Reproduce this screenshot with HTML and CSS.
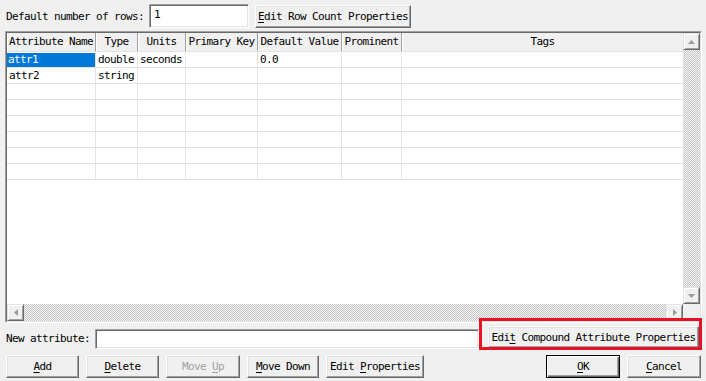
FILE: index.html
```html
<!DOCTYPE html>
<html>
<head>
<meta charset="utf-8">
<link rel="stylesheet" href="styles.css">
</head>
<body>
<div class="dialog">
  <div class="top-row">
    <span class="rows-lbl">Default number of rows:</span>
    <div class="field rows-field">1</div>
    <button class="btn row-count-btn"><u>E</u>dit Row Count Properties</button>
  </div>

  <div class="frame">
    <div class="frame-inner">
      <div class="upper">
        <div class="grid">
          <div class="head">
            <div class="hc">Attribute Name</div>
            <div class="hc">Type</div>
            <div class="hc">Units</div>
            <div class="hc">Primary Key</div>
            <div class="hc">Default Value</div>
            <div class="hc">Prominent</div>
            <div class="hc last">Tags</div>
          </div>
          <div class="row">
            <div class="c sel">attr1</div><div class="c">double</div><div class="c">seconds</div><div class="c"></div><div class="c">0.0</div><div class="c"></div><div class="c last"></div>
          </div>
          <div class="row">
            <div class="c">attr2</div><div class="c">string</div><div class="c"></div><div class="c"></div><div class="c"></div><div class="c"></div><div class="c last"></div>
          </div>
          <div class="row">
            <div class="c"></div><div class="c"></div><div class="c"></div><div class="c"></div><div class="c"></div><div class="c"></div><div class="c last"></div>
          </div>
          <div class="row">
            <div class="c"></div><div class="c"></div><div class="c"></div><div class="c"></div><div class="c"></div><div class="c"></div><div class="c last"></div>
          </div>
          <div class="row">
            <div class="c"></div><div class="c"></div><div class="c"></div><div class="c"></div><div class="c"></div><div class="c"></div><div class="c last"></div>
          </div>
          <div class="row">
            <div class="c"></div><div class="c"></div><div class="c"></div><div class="c"></div><div class="c"></div><div class="c"></div><div class="c last"></div>
          </div>
          <div class="row">
            <div class="c"></div><div class="c"></div><div class="c"></div><div class="c"></div><div class="c"></div><div class="c"></div><div class="c last"></div>
          </div>
          <div class="row">
            <div class="c"></div><div class="c"></div><div class="c"></div><div class="c"></div><div class="c"></div><div class="c"></div><div class="c last"></div>
          </div>
        </div>
        <div class="vscroll">
          <div class="sbtn"><svg width="7" height="4" viewBox="0 0 7 4"><path d="M0 4L3.5 0L7 4Z" fill="#9a9a9a"/></svg></div>
          <div class="trough"></div>
          <div class="sbtn"><svg width="7" height="4" viewBox="0 0 7 4"><path d="M0 0L7 0L3.5 4Z" fill="#9a9a9a"/></svg></div>
        </div>
      </div>
      <div class="lower">
        <div class="hscroll">
          <div class="sbtn"><svg width="4" height="7" viewBox="0 0 4 7"><path d="M4 0L0 3.5L4 7Z" fill="#9a9a9a"/></svg></div>
          <div class="trough"></div>
          <div class="sbtn"><svg width="4" height="7" viewBox="0 0 4 7"><path d="M0 0L4 3.5L0 7Z" fill="#9a9a9a"/></svg></div>
        </div>
        <div class="corner"></div>
      </div>
    </div>
  </div>

  <div class="new-row">
    <span class="new-lbl">New attribute:</span>
    <div class="field new-field"></div>
    <button class="btn compound-btn">Edi<u>t</u> Compound Attribute Properties</button>
  </div>

  <div class="btn-row">
    <button class="btn b-add"><u>A</u>dd</button>
    <button class="btn b-del"><u>D</u>elete</button>
    <button class="btn b-up disabled">Move <u>U</u>p</button>
    <button class="btn b-down"><u>M</u>ove Down</button>
    <button class="btn b-props">Edit <u>P</u>roperties</button>
    <button class="btn b-ok default"><u>O</u>K</button>
    <button class="btn b-cancel"><u>C</u>ancel</button>
  </div>

  <div class="callout"></div>
</div>
</body>
</html>
```

FILE: styles.css
```css
html, body {
  margin: 0;
  padding: 0;
}
body {
  width: 706px;
  height: 381px;
  overflow: hidden;
  background: #f0f0f0;
  font-family: "DejaVu Sans Mono", "Liberation Mono", monospace;
  font-size: 11px;
  letter-spacing: -0.62px;
  color: #000;
}
.dialog {
  position: relative;
  width: 706px;
  height: 381px;
}

/* top row */
.top-row {
  display: flex;
  align-items: center;
  height: 24px;
  padding-top: 4px;
  margin-bottom: 3px;
}
.rows-lbl {
  width: 149px;
  padding-left: 6px;
  box-sizing: border-box;
  white-space: nowrap;
}
.field {
  background: #fff;
  border: 1px solid;
  border-color: #a0a0a0 #fff #fff #a0a0a0;
  box-shadow: inset 1px 1px #696969, inset -1px -1px #e3e3e3;
  box-sizing: border-box;
}
.rows-field {
  width: 100px;
  height: 24px;
  padding-left: 4px;
  line-height: 20px;
}
.btn {
  font: inherit;
  letter-spacing: inherit;
  color: #000;
  background: #f0f0f0;
  border: 1px solid;
  border-color: #fff #696969 #696969 #fff;
  box-shadow: inset -1px -1px #a0a0a0, inset 1px 1px #e3e3e3;
  padding: 0;
  margin: 0;
  box-sizing: border-box;
  text-align: center;
  white-space: nowrap;
}
.btn u {
  text-underline-offset: 2px;
}
.row-count-btn {
  margin-left: 6px;
  width: 156px;
  height: 23px;
}

/* table frame */
.frame {
  margin-left: 5px;
  width: 697px;
  height: 292px;
  border: 1px solid;
  border-color: #a0a0a0 #fff #fff #a0a0a0;
  box-sizing: border-box;
}
.frame-inner {
  height: 100%;
  border: 1px solid;
  border-color: #696969 #e3e3e3 #e3e3e3 #696969;
  box-sizing: border-box;
  display: flex;
  flex-direction: column;
}
.upper {
  display: flex;
  height: 271px;
}
.grid {
  width: 676px;
  background: #fff;
}
.head,
.row {
  display: grid;
  grid-template-columns: 89px 42px 48px 72px 84px 60px 1fr;
}
.head {
  height: 19px;
  background: #f0f0f0;
  border-bottom: 1px solid #e3e3e3;
  box-sizing: border-box;
}
.hc {
  border-right: 1px solid #a0a0a0;
  box-shadow: inset 1px 0 #fff;
  text-align: center;
  line-height: 18px;
  white-space: nowrap;
  overflow: hidden;
}
.hc.last {
  border-right: none;
}
.row {
  height: 16px;
  border-bottom: 1px solid #e3e3e3;
  box-sizing: border-box;
}
.c {
  border-right: 1px solid #e3e3e3;
  padding-left: 2px;
  line-height: 15px;
  white-space: nowrap;
  overflow: hidden;
}
.c.last {
  border-right: none;
}
.c.sel {
  background: #0078d7;
  color: #fff;
  padding-left: 1px;
  box-shadow: inset 0 1px #fff;
}

/* scrollbars */
.vscroll {
  width: 17px;
  display: flex;
  flex-direction: column;
}
.lower {
  display: flex;
  height: 17px;
}
.hscroll {
  width: 676px;
  display: flex;
}
.corner {
  flex: 1;
  background: #f0f0f0;
}
.sbtn {
  width: 17px;
  height: 17px;
  flex: none;
  box-sizing: border-box;
  background: #f0f0f0;
  border: 1px solid;
  border-color: #e3e3e3 #696969 #696969 #e3e3e3;
  box-shadow: inset 1px 1px #fff, inset -1px -1px #a0a0a0;
  display: flex;
  align-items: center;
  justify-content: center;
}
.trough {
  flex: 1;
  background: repeating-conic-gradient(#f4f4f4 0 25%, #c6c6c6 0 50%) 0 0 / 2px 2px;
}

/* new attribute row */
.new-row {
  display: flex;
  align-items: flex-end;
  height: 28px;
}
.new-lbl {
  width: 95px;
  padding-left: 6px;
  box-sizing: border-box;
  line-height: 20px;
  margin-bottom: 2px;
  white-space: nowrap;
}
.new-field {
  width: 384px;
  height: 20px;
  margin-bottom: 2px;
}
.compound-btn {
  margin-left: 9px;
  width: 211px;
  height: 22px;
  margin-bottom: 3px;
}

/* bottom buttons */
.btn-row {
  display: flex;
  gap: 7px;
  margin-top: 4px;
  padding: 0 5px 0 6px;
  height: 23px;
}
.btn-row .btn {
  height: 23px;
}
.b-add { width: 73px; }
.b-del { width: 73px; }
.b-up { width: 74px; }
.b-down { width: 72px; }
.b-props { width: 98px; }
.b-ok { width: 74px; margin-left: auto; }
.b-cancel { width: 74px; }
.btn.disabled {
  color: #a0a0a0;
}
.btn.default {
  border-color: #000;
  box-shadow: inset 1px 1px #fff, inset -1px -1px #696969, inset -2px -2px #a0a0a0;
}

/* annotation overlay */
.callout {
  position: absolute;
  left: 479px;
  top: 318px;
  width: 223px;
  height: 32px;
  border: 3px solid #e81123;
  box-sizing: border-box;
  pointer-events: none;
}
```
